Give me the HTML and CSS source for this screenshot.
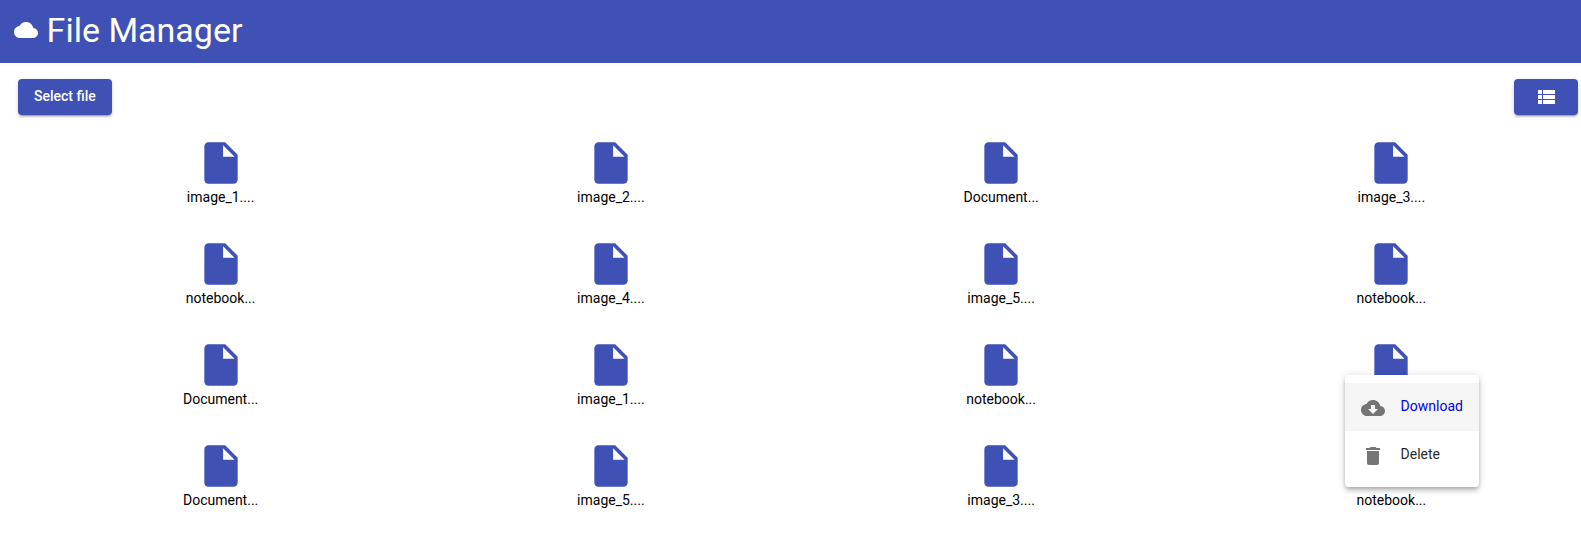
FILE: index.html
```
<!DOCTYPE html>
<html lang="en">
<head>
<meta charset="utf-8">
<title>File Manager</title>
<link rel="stylesheet" href="styles.css">
</head>
<body>
<svg class="sprite" aria-hidden="true">
  <symbol id="file" viewBox="0 0 24 24"><path d="M6 2c-1.1 0-1.99.9-1.99 2L4 20c0 1.1.89 2 1.99 2H18c1.1 0 2-.9 2-2V8l-6-6H6zm7 7V3.5L18.5 9H13z"/></symbol>
</svg>
<header class="toolbar">
  <svg class="icon" viewBox="0 0 24 24"><path d="M19.35 10.04C18.67 6.59 15.64 4 12 4 9.11 4 6.6 5.64 5.35 8.04 2.34 8.36 0 10.91 0 14c0 3.31 2.69 6 6 6h13c2.76 0 5-2.24 5-5 0-2.64-2.05-4.78-4.65-4.96z"/></svg>
  <h1 class="title">File Manager</h1>
</header>
<div class="actions">
  <button class="btn">Select file</button>
  <button class="btn btn-view" aria-label="List view"><svg class="icon" viewBox="0 0 24 24"><path d="M4 14h4v-4H4v4zm0 5h4v-4H4v4zM4 9h4V5H4v4zm5 5h12v-4H9v4zm0 5h12v-4H9v4zM9 5v4h12V5H9z"/></svg></button>
</div>
<main class="files">
  <div class="file"><svg class="file-icon"><use href="#file"/></svg><span>image_1....</span></div>
  <div class="file"><svg class="file-icon"><use href="#file"/></svg><span>image_2....</span></div>
  <div class="file"><svg class="file-icon"><use href="#file"/></svg><span>Document...</span></div>
  <div class="file"><svg class="file-icon"><use href="#file"/></svg><span>image_3....</span></div>
  <div class="file"><svg class="file-icon"><use href="#file"/></svg><span>notebook...</span></div>
  <div class="file"><svg class="file-icon"><use href="#file"/></svg><span>image_4....</span></div>
  <div class="file"><svg class="file-icon"><use href="#file"/></svg><span>image_5....</span></div>
  <div class="file"><svg class="file-icon"><use href="#file"/></svg><span>notebook...</span></div>
  <div class="file"><svg class="file-icon"><use href="#file"/></svg><span>Document...</span></div>
  <div class="file"><svg class="file-icon"><use href="#file"/></svg><span>image_1....</span></div>
  <div class="file"><svg class="file-icon"><use href="#file"/></svg><span>notebook...</span></div>
  <div class="file"><svg class="file-icon"><use href="#file"/></svg></div>
  <div class="file"><svg class="file-icon"><use href="#file"/></svg><span>Document...</span></div>
  <div class="file"><svg class="file-icon"><use href="#file"/></svg><span>image_5....</span></div>
  <div class="file"><svg class="file-icon"><use href="#file"/></svg><span>image_3....</span></div>
  <div class="file"><svg class="file-icon"><use href="#file"/></svg><span>notebook...</span></div>
</main>
<div class="menu">
  <a class="menu-item active"><svg class="icon" viewBox="0 0 24 24"><path d="M19.35 10.04C18.67 6.59 15.64 4 12 4 9.11 4 6.6 5.64 5.35 8.04 2.34 8.36 0 10.91 0 14c0 3.31 2.69 6 6 6h13c2.76 0 5-2.24 5-5 0-2.64-2.05-4.78-4.65-4.96zM17 13l-5 5-5-5h3V9h4v4h3z"/></svg><span>Download</span></a>
  <a class="menu-item"><svg class="icon" viewBox="0 0 24 24"><path d="M6 19c0 1.1.9 2 2 2h8c1.1 0 2-.9 2-2V7H6v12zM19 4h-3.5l-1-1h-5l-1 1H5v2h14V4z"/></svg><span>Delete</span></a>
</div>
</body>
</html>
```
FILE: styles.css
```
body {
  margin: 0;
  height: 546px;
  overflow: hidden;
  position: relative;
  background: #fff;
  color: rgba(0, 0, 0, 0.87);
  font: 14px/20px Roboto, sans-serif;
}
.sprite {
  display: none;
}
.icon {
  width: 24px;
  height: 24px;
  fill: currentColor;
  flex: none;
}
.toolbar {
  display: flex;
  align-items: center;
  gap: 8.6px;
  height: 63px;
  padding: 0 14px;
  box-sizing: border-box;
  background: #3f51b5;
  color: #fff;
}
.toolbar .icon {
  margin-bottom: 3px;
}
.title {
  margin: 0 0 4px;
  font-size: 34px;
  line-height: 40px;
  font-weight: 400;
}
.actions {
  display: flex;
  justify-content: space-between;
  padding: 16px 3px 0 18px;
}
.btn {
  height: 36px;
  padding: 0 16px 2px;
  border: 0;
  border-radius: 4px;
  background: #3f51b5;
  color: #fff;
  font: 500 14px/34px Roboto, sans-serif;
  box-shadow: 0 3px 1px -2px rgba(0, 0, 0, 0.2), 0 2px 2px 0 rgba(0, 0, 0, 0.14), 0 1px 5px 0 rgba(0, 0, 0, 0.12);
}
.btn-view {
  display: flex;
  align-items: center;
  justify-content: center;
  width: 64px;
  padding: 0;
}
.files {
  display: grid;
  grid-template-columns: repeat(4, 1fr);
  grid-auto-rows: 101px;
  column-gap: 11px;
  padding: 23px 0 0 31px;
}
.file {
  display: flex;
  flex-direction: column;
  align-items: center;
  color: #000;
  line-height: 18px;
}
.file-icon {
  width: 50px;
  height: 50px;
  fill: #3f51b5;
}
.menu {
  position: absolute;
  left: 1345px;
  top: 375px;
  width: 134px;
  padding: 8px 0;
  box-sizing: border-box;
  border-radius: 4px;
  background: #fff;
  box-shadow: 0 2px 4px -1px rgba(0, 0, 0, 0.2), 0 4px 5px 0 rgba(0, 0, 0, 0.14), 0 1px 10px 0 rgba(0, 0, 0, 0.12);
}
.menu-item {
  display: flex;
  align-items: center;
  gap: 16px;
  height: 48px;
  padding: 0 16px 0 15.6px;
}
.menu-item .icon {
  color: #757575;
  margin-top: 2px;
}
.menu-item span {
  margin-bottom: 3px;
}
.menu-item.active {
  background: #f5f5f5;
}
.menu-item.active span {
  color: #0000ee;
}
```
